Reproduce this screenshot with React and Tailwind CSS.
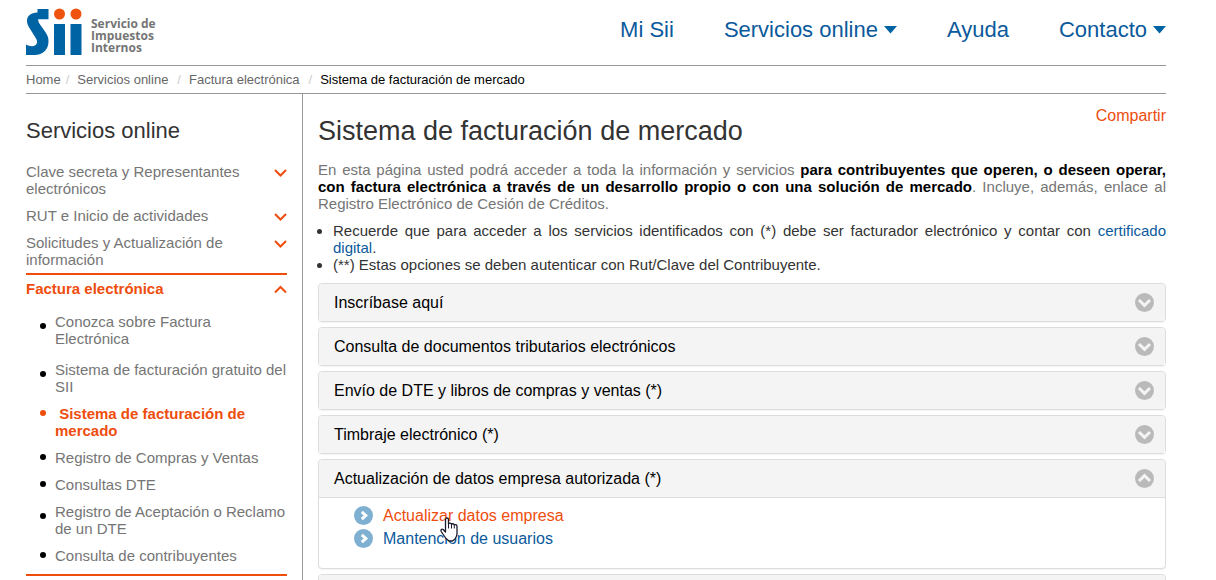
import { useState } from "react";

const navLinks = [
  { label: "Mi Sii" },
  { label: "Servicios online", menu: true },
  { label: "Ayuda" },
  { label: "Contacto", menu: true },
];

const closedSections = [
  "Clave secreta y Representantes electrónicos",
  "RUT e Inicio de actividades",
  "Solicitudes y Actualización de información",
];

const facturaLinks = [
  { label: "Conozca sobre Factura Electrónica", bullet: "mt-[10px]", space: "mb-[14px]" },
  { label: "Sistema de facturación gratuito del SII", bullet: "mt-[10px]", space: "mb-[10px]" },
  { label: "Sistema de facturación de mercado", active: true, bullet: "mt-[5px]", space: "mb-[10px]" },
  { label: "Registro de Compras y Ventas", bullet: "mt-[5px]", space: "mb-[10px]" },
  { label: "Consultas DTE", bullet: "mt-[5px]", space: "mb-[10px]" },
  { label: "Registro de Aceptación o Reclamo de un DTE", bullet: "mt-[10px]", space: "mb-[10px]" },
  { label: "Consulta de contribuyentes", bullet: "mt-[5px]", space: "mb-[10px]" },
];

const panels = [
  { title: "Inscríbase aquí", links: [] },
  { title: "Consulta de documentos tributarios electrónicos", links: [] },
  { title: "Envío de DTE y libros de compras y ventas (*)", links: [] },
  { title: "Timbraje electrónico (*)", links: [] },
  {
    title: "Actualización de datos empresa autorizada (*)",
    links: ["Actualizar datos empresa", "Mantención de usuarios"],
  },
  { title: "", links: [] },
];

const chevronMarks = {
  down: "M4 7 9.500 12.300 15 7",
  up: "M4 12 9.500 6.700 15 12",
  right: "M7.800 5.800 11.800 9.500 7.800 13.200",
};

function Logo() {
  return (
    <a href="#" aria-label="Servicio de Impuestos Internos" className="flex gap-[9px]">
      <svg width="56" height="48" viewBox="0 0 56 48" className="shrink-0">
        <path
          fill="#0063a4"
          d="M11.500 1h11v10.200H12c.3 3 2 5.500 4 8l3.500 5c2 3 3 5.500 3 9C22.500 41.500 17 47 8.500 47H0V36.500c2 1.200 4 1.700 6 1.700 4.500 0 6.500-3.700 4-7.700L3.500 20C2 17.500 1 15.500 1 13 1 8 4.500 4.700 11.500 4.500z"
        />
        <path fill="#0063a4" d="M28 16h11v31H28zM44.500 16h11v31h-11z" />
        <circle cx="33.5" cy="6" r="5.500" fill="#ee5310" />
        <circle cx="50" cy="6" r="5.500" fill="#ee5310" />
      </svg>
      <span className="pt-[10px] font-['Open_Sans',sans-serif] text-[12px] leading-[12px] font-bold text-[#757575]">
        Servicio de
        <br />
        Impuestos
        <br />
        Internos
      </span>
    </a>
  );
}

function Chevron({ up }) {
  return (
    <svg width="13" height="9" viewBox="0 0 13 9" className="mt-[5px] shrink-0" fill="none" stroke="#ee4d0e" strokeWidth="2">
      {up ? <path d="M1 7.5 6.5 2 12 7.5" /> : <path d="M1 2 6.5 7.500 12 2" />}
    </svg>
  );
}

function CircleChevron({ direction, fill, mark }) {
  return (
    <svg width="19" height="19" viewBox="0 0 19 19" className="shrink-0">
      <circle cx="9.5" cy="9.5" r="9.5" fill={fill} />
      <path d={chevronMarks[direction]} fill="none" stroke={mark} strokeWidth="3" />
    </svg>
  );
}

function HandCursor() {
  return (
    <svg width="18" height="25" viewBox="0 0 18 25" className="pointer-events-none absolute top-[19px] left-[121px]">
      <path
        fill="#fff"
        stroke="#1b1b2b"
        strokeWidth="1.3"
        strokeLinejoin="round"
        d="M5.500 15V2.500c0-2 3-2 3 0V7c.3-1.200 2.700-1.200 3 .5.400-1.200 2.600-1 2.800.7.500-1 2.700-.8 2.700 1.300V17c0 2-1 3.500-2 5l-2.500 2H9l-3-2.500-4.500-6.500C0 12.500 2 11.500 3.200 12.500z"
      />
      <path d="M8.500 7v4.500M11.500 7.500v4M14.300 8.500v3" stroke="#1b1b2b" strokeWidth="1" />
    </svg>
  );
}

function Sidebar() {
  return (
    <aside className="w-[277px] shrink-0 border-r border-[#999] pr-[15px] text-[15px] leading-[17px] text-[#757575]">
      <h2 className="mt-[24px] mb-[19px] text-[22px] leading-[26px] text-[#333]">Servicios online</h2>
      {closedSections.map((label) => (
        <button key={label} type="button" className="mb-[10px] flex w-full items-start justify-between text-left last-of-type:mb-0">
          <span className="w-[230px]">{label}</span>
          <Chevron />
        </button>
      ))}
      <div className="mt-[5px] border-y-2 border-[#ee4d0e] pt-[5px]">
        <button type="button" className="mb-[16px] flex w-full items-start justify-between text-left font-bold text-[#ee4d0e]">
          Factura electrónica
          <Chevron up />
        </button>
        <ul className="pl-[14px]">
          {facturaLinks.map((item) => (
            <li key={item.label} className={`flex items-start gap-[9px] ${item.space}`}>
              <span
                className={`size-[6px] shrink-0 rounded-full ${item.bullet} ${item.active ? "bg-[#ee4d0e]" : "bg-black"}`}
              />
              <a href="#" className={item.active ? "font-bold text-[#ee4d0e]" : ""}>
                {item.active && "\u00a0"}
                {item.label}
              </a>
            </li>
          ))}
        </ul>
      </div>
    </aside>
  );
}

function Panel({ title, links, open, onToggle }) {
  return (
    <section className="mb-[5px] rounded border border-[#ddd] bg-white shadow-[0_1px_1px_rgba(0,0,0,0.05)]">
      <h3>
        <button
          type="button"
          aria-expanded={open}
          onClick={onToggle}
          className="flex h-[37px] w-full items-center justify-between rounded-t bg-[#f4f4f4] pr-[11px] pl-[15px] text-left text-black"
        >
          {title}
          <CircleChevron direction={open ? "up" : "down"} fill="#bababa" mark="#f4f4f4" />
        </button>
      </h3>
      {open && (
        <div className="relative border-t border-[#ddd] pt-[6px] pb-[18px] pl-[35px]">
          <ul>
            {links.map((label, i) => (
              <li key={label} className="flex h-[23px] items-center gap-[10px]">
                <CircleChevron direction="right" fill="#7fafd1" mark="#fff" />
                <a href="#" className={i === 0 ? "text-[#ee4d0e]" : "text-[#0b5a9c]"}>
                  {label}
                </a>
              </li>
            ))}
          </ul>
          <HandCursor />
        </div>
      )}
    </section>
  );
}

function App() {
  const [open, setOpen] = useState(4);

  return (
    <div className="flex h-screen flex-col overflow-hidden bg-white pr-[50px] pl-[26px] font-['Liberation_Sans',Arial,sans-serif] text-[16px]">
      <header className="flex h-[65px] shrink-0 items-start justify-between pt-[8px]">
        <Logo />
        <nav className="flex gap-[50px] pt-[9px] text-[22px] leading-[26px] text-[#0b5a9c]">
          {navLinks.map((item) => (
            <a key={item.label} href="#" className="flex items-center gap-[6px]">
              {item.label}
              {item.menu && (
                <svg width="13" height="8" viewBox="0 0 13 8">
                  <path d="M0 0h13L6.500 7.500z" fill="#0063a4" />
                </svg>
              )}
            </a>
          ))}
        </nav>
      </header>

      <nav aria-label="breadcrumb" className="flex h-[29px] shrink-0 items-center border-y border-[#999] text-[13px] text-[#666]">
        <a href="#">Home</a>
        <span className="pr-[8px] pl-[5px] text-[#ccc]">/</span>
        <a href="#">Servicios online</a>
        <span className="pr-[8px] pl-[9px] text-[#ccc]">/</span>
        <a href="#">Factura electrónica</a>
        <span className="pr-[8px] pl-[9px] text-[#ccc]">/</span>
        <span className="text-black">Sistema de facturación de mercado</span>
      </nav>

      <div className="flex grow">
        <Sidebar />
        <main className="min-w-0 grow pl-[15px]">
          <div className="flex items-start justify-between">
            <h1 className="mt-[21px] text-[27px] leading-[32px] text-[#333]">Sistema de facturación de mercado</h1>
            <a href="#" className="mt-[13px] leading-[18px] text-[#ee4d0e]">
              Compartir
            </a>
          </div>
          <p className="mt-[14px] text-justify text-[15px] leading-[17px] text-[#757575]">
            En esta página usted podrá acceder a toda la información y servicios{" "}
            <strong className="text-black">
              para contribuyentes que operen, o deseen operar, con factura electrónica a través de un desarrollo
              propio o con una solución de mercado
            </strong>
            . Incluye, además, enlace al Registro Electrónico de Cesión de Créditos.
          </p>
          <ul className="mt-[10px] mb-[10px] list-disc pl-[15px] text-justify text-[15px] leading-[17px] text-[#333]">
            <li>
              Recuerde que para acceder a los servicios identificados con (*) debe ser facturador electrónico y contar
              con{" "}
              <a href="#" className="text-[#0b5a9c]">
                certificado digital
              </a>
              .
            </li>
            <li>(**) Estas opciones se deben autenticar con Rut/Clave del Contribuyente.</li>
          </ul>
          {panels.map((panel, i) => (
            <Panel key={i} {...panel} open={open === i} onToggle={() => setOpen(open === i ? -1 : i)} />
          ))}
        </main>
      </div>
    </div>
  );
}

export default App;
